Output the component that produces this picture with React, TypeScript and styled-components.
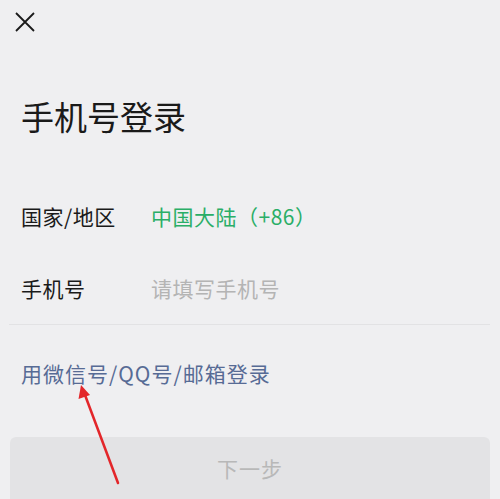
import React from 'react';
import styled, { createGlobalStyle } from 'styled-components';

const GlobalStyle = createGlobalStyle`
  html, body {
    margin: 0;
    padding: 0;
    background: #efeff1;
  }
  body {
    font-family: "Noto Sans CJK SC", "Noto Sans", sans-serif;
  }
`;

const Page = styled.div`
  position: relative;
  width: 500px;
  height: 499px;
  overflow: hidden;
  box-sizing: border-box;
  padding: 0 10px 0 9px;
  background: #efeff1;
  display: flex;
  flex-direction: column;
`;

const Header = styled.div`
  display: flex;
  align-items: center;
  padding: 12px 0 0 6px;
  height: 20px;
`;

const CloseButton = styled.button`
  width: 20px;
  height: 20px;
  padding: 0;
  border: none;
  background: transparent;
  display: flex;
  cursor: pointer;
`;

const Title = styled.h1`
  margin: 62px 0 0;
  padding-left: 12px;
  font-size: 33px;
  font-weight: 400;
  line-height: 44px;
  color: #1a1a1a;
`;

const Form = styled.div`
  margin-top: 42px;
  display: flex;
  flex-direction: column;
  border-bottom: 1px solid #e2e2e4;
`;

const Row = styled.div`
  height: 72px;
  display: flex;
  align-items: center;
  padding-left: 12px;
  font-size: 21px;
  letter-spacing: 0.5px;
`;

const Label = styled.span`
  width: 130px;
  color: #1a1a1a;
`;

const Value = styled.span<{ $tone: 'green' | 'placeholder' }>`
  color: ${(p) => (p.$tone === 'green' ? '#2aae67' : '#b4b4b4')};
`;

const SwitchLink = styled.a`
  display: block;
  margin-top: 34px;
  padding-left: 12px;
  font-size: 21px;
  letter-spacing: 1px;
  line-height: 28px;
  color: #576b95;
  text-decoration: none;
`;

const NextButton = styled.button`
  margin: auto 0 0 1px;
  height: 62px;
  border: none;
  border-radius: 6px 6px 0 0;
  background: #e3e3e5;
  color: #b8b8b8;
  font-family: inherit;
  font-size: 21px;
  letter-spacing: 1px;
`;

const Arrow = styled.svg`
  position: absolute;
  left: 0;
  top: 0;
  pointer-events: none;
`;

export default function App() {
  return (
    <>
      <GlobalStyle />
      <Page>
        <Header>
          <CloseButton aria-label="关闭">
            <svg width="20" height="20" viewBox="0 0 20 20">
              <path d="M1 1 L19 19 M19 1 L1 19" stroke="#1a1a1a" strokeWidth="1.8" fill="none" />
            </svg>
          </CloseButton>
        </Header>
        <Title>手机号登录</Title>
        <Form>
          <Row>
            <Label>国家/地区</Label>
            <Value $tone="green">中国大陆（+86）</Value>
          </Row>
          <Row>
            <Label>手机号</Label>
            <Value $tone="placeholder">请填写手机号</Value>
          </Row>
        </Form>
        <SwitchLink>用微信号/QQ号/邮箱登录</SwitchLink>
        <NextButton>下一步</NextButton>
        <Arrow width="500" height="499" viewBox="0 0 500 499">
          <line x1="118" y1="483" x2="85" y2="395" stroke="#e3262a" strokeWidth="2.5" strokeLinecap="round" />
          <polygon points="81,385 78.5,399 90,395" fill="#e3262a" />
        </Arrow>
      </Page>
    </>
  );
}
